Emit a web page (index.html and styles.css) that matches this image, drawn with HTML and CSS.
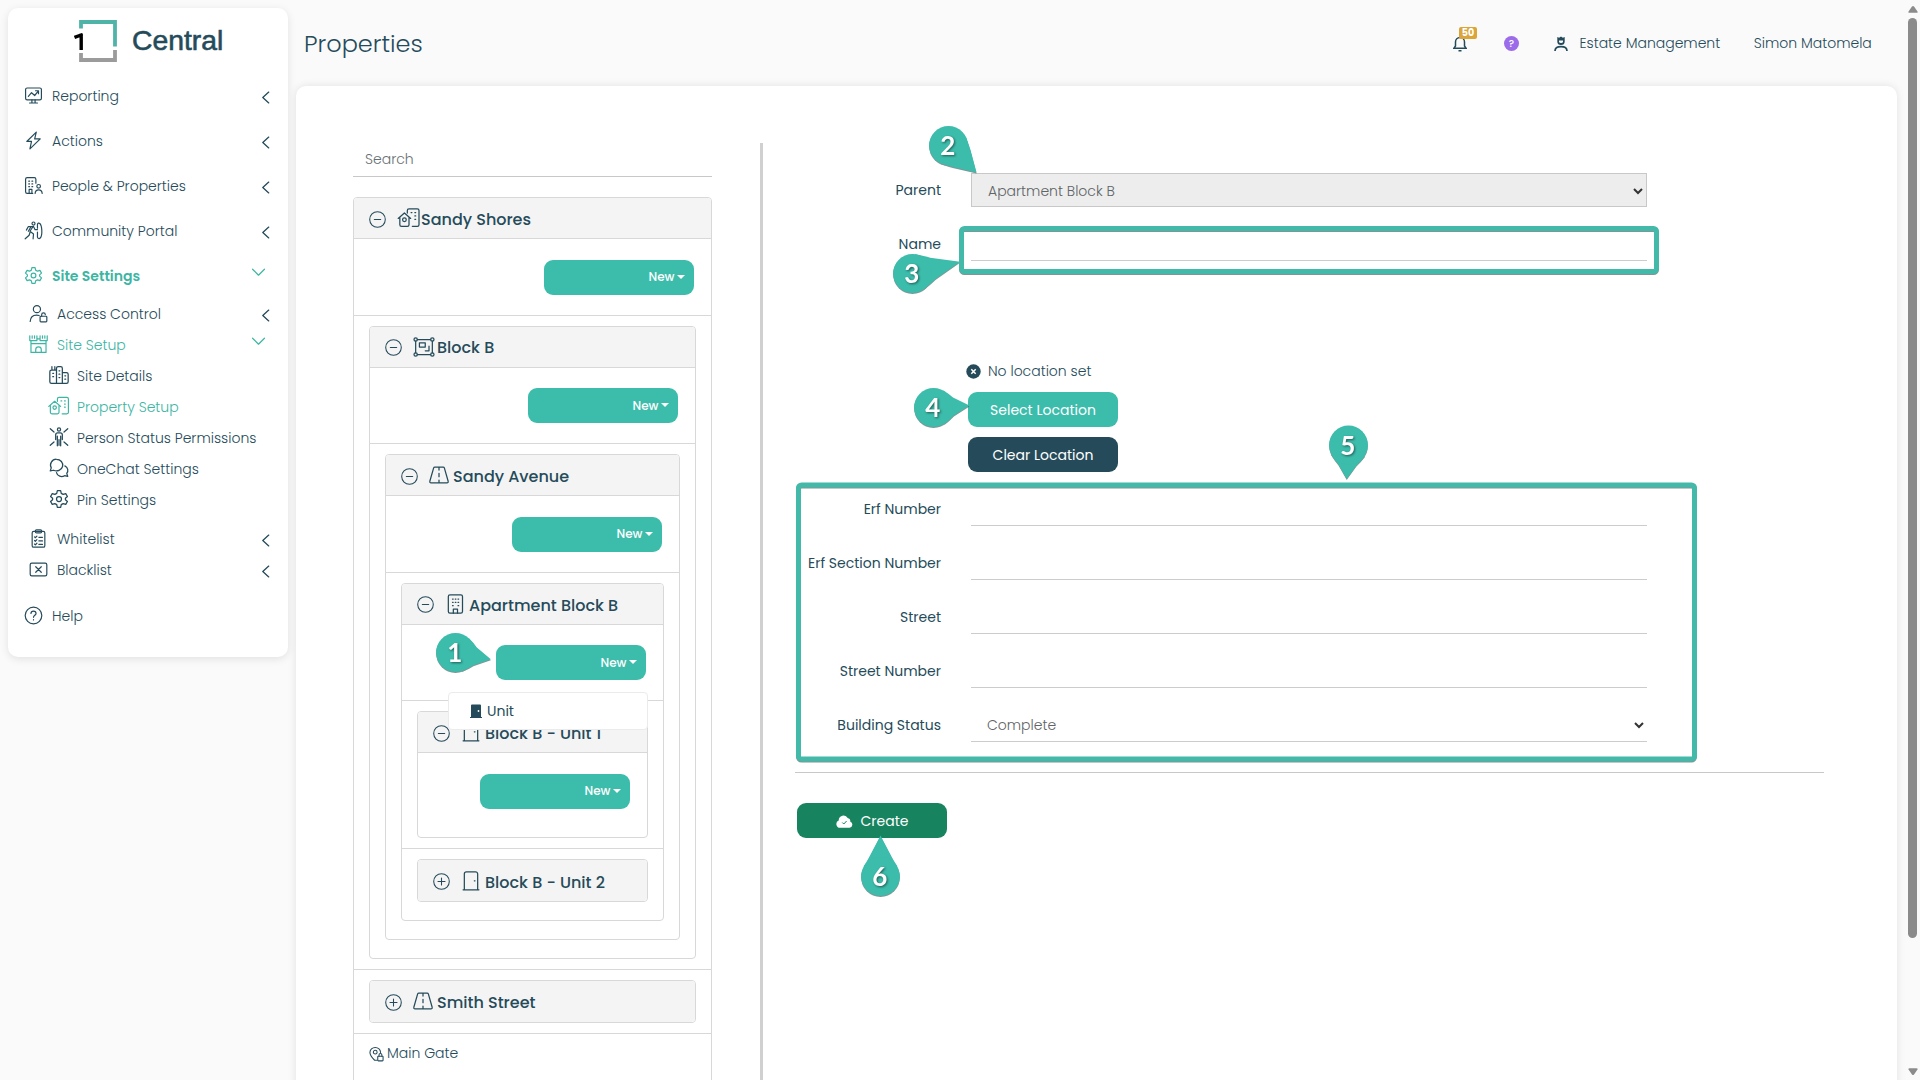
FILE: index.html
```html
<!DOCTYPE html>
<html lang="en">
<head>
    <meta charset="UTF-8">
    <meta name="viewport" content="width=device-width, initial-scale=1.0">
    <title>Properties</title>
    <link rel="stylesheet" href="styles.css">
</head>
<body>
    <!-- icon set -->
    <svg class="sprite">
        <symbol id="i-report" viewBox="0 0 24 24"><rect x="2" y="2.5" width="20" height="15" rx="2"/><path d="M10 17.5v4M14 17.5v4M7 21.5h10M5.5 13l4-4.5 4 3.5 4.5-5.5M14.5 6h3.8v3.8"/></symbol>
        <symbol id="i-bolt" viewBox="0 0 24 24"><path d="M15.5 1.5 3.5 13.2h6L7.5 22.5 20.5 10h-7z"/></symbol>
        <symbol id="i-people" viewBox="0 0 24 24"><path d="M11 22H4a2 2 0 0 1-2-2V4a2 2 0 0 1 2-2h9a2 2 0 0 1 2 2v5M6.5 22v-5H10v5M14 22c.3-3 2-4.5 4.5-4.5S22.7 19 23 22"/><circle cx="18.5" cy="13" r="2.3"/><path d="M6 6.5h1M10 6.5h1M6 10h1M10 10h1M6 13.5h1M10 13.5h1"/></symbol>
        <symbol id="i-portal" viewBox="0 0 24 24"><circle cx="12" cy="3.2" r="1.9"/><path d="M3 11.5 5.5 7h6l-4 6 4.5 3.5-.5 6M7.5 14.5 6.5 18 1.5 22.5M12 7l2 4h3M9 7l-3.5 6"/><path d="M17 4c1-2.5 5-2.5 5.5 8S18.5 24 17 20.5M17 4v5M17 14v6.5"/></symbol>
        <symbol id="i-gear" viewBox="0 0 24 24"><circle cx="12" cy="12" r="3"/><path d="M10 2h4l.7 3.2 2.3 1.3 3.1-1 2 3.5-2.4 2.2v1.600l2.400 2.200-2 3.500-3.100-1-2.300 1.300L14 22h-4l-.7-3.200L7 17.500l-3.100 1-2-3.500 2.400-2.200v-1.600L1.900 9l2-3.500 3.100 1 2.300-1.300z"/></symbol>
        <symbol id="i-access" viewBox="0 0 24 24"><circle cx="10" cy="6.5" r="4.5"/><path d="M1.5 22c.3-5 3.5-8 8-8 1.2 0 2.3.2 3.3.6M16 15.5v-2a2.3 2.3 0 0 1 4.6 0"/><rect x="14" y="15.5" width="8.5" height="7" rx="1"/></symbol>
        <symbol id="i-castle" viewBox="0 0 24 24"><path d="M1 1v6h9V1M4 1v3M7 1v3M14 1v6h9V1M17 1v3M20 1v3M10 5h4M2.5 7v15h19V7M2.5 11h19M8.5 22v-3.5a3.5 3.5 0 0 1 7 0V22"/></symbol>
        <symbol id="i-city" viewBox="0 0 24 24"><path d="M9 22H3a2 2 0 0 1-2-2V8a2 2 0 0 1 2-2h6M3.5 6V2M7 6V2M9 22V4a2 2 0 0 1 2-2h3a2 2 0 0 1 2 2v18zM16 9h5a2 2 0 0 1 2 2v9a2 2 0 0 1-2 2h-5"/><path d="M4.5 10h1M4.5 14h1M12 7h1M12 11h1M12 15h1M19 13h1M19 17h1"/></symbol>
        <symbol id="i-property" viewBox="0 0 28 24"><path d="M1 12.5 8.5 6l7.5 6.5M3 11v9a2 2 0 0 0 2 2h7a2 2 0 0 0 2-2v-9M12 6V3a2 2 0 0 1 2-2h10a2 2 0 0 1 2 2v17a2 2 0 0 1-2 2h-6"/><circle cx="8.5" cy="14" r="2.2"/><path d="M16.5 5.5h1M21 5.5h1M21 9.5h1M21 13.5h1"/></symbol>
        <symbol id="i-person" viewBox="0 0 24 24"><circle cx="12" cy="3" r="1.9"/><path d="M8 9.5A2.5 2.5 0 0 1 10.5 7h3A2.5 2.5 0 0 1 16 9.5V15M8 9.5V15M10 11v11.5M14 11v11.5M12 15v7M1.5 2 6 6M22.5 2 18 6M1.5 22 6 18M22.5 22 18 18"/></symbol>
        <symbol id="i-chat" viewBox="0 0 24 24"><path d="M9 1.5a7.5 7 0 1 1-3.5 13.2L1.5 15.5l1.2-3.6A7 7 0 0 1 9 1.5zM19 9.5c4 2 4.5 6 2.3 9l1.2 3.5-3.8-.8c-3.7 2.3-8.7.6-9.7-3.7"/></symbol>
        <symbol id="i-list" viewBox="0 0 24 24"><rect x="4" y="3" width="16" height="20" rx="2"/><rect x="8" y="1" width="8" height="4" rx="1.5"/><path d="m7 10 1 1 2-2M7 14.5l1 1 2-2M7 19l1 1 2-2M12.5 10.5H17M12.5 15H17M12.5 19.5H17"/></symbol>
        <symbol id="i-block" viewBox="0 0 24 24"><rect x="1.5" y="4" width="21" height="16" rx="2"/><path d="m8.5 8.5 7 7M15.5 8.5l-7 7"/></symbol>
        <symbol id="i-help" viewBox="0 0 24 24"><circle cx="12" cy="12" r="10.5"/><path d="M8.8 9.5c0-4 6.4-4 6.4 0 0 2.2-3.2 2.3-3.2 4.8M12 17.3v.4"/></symbol>
        <symbol id="i-left" viewBox="0 0 24 24"><path d="M18 2 7 12l11 10"/></symbol>
        <symbol id="i-down" viewBox="0 0 24 24"><path d="m1 6 11 11L23 6"/></symbol>
        <symbol id="i-minus" viewBox="0 0 24 24"><circle cx="12" cy="12" r="11"/><path d="M7.5 12h9"/></symbol>
        <symbol id="i-plus" viewBox="0 0 24 24"><circle cx="12" cy="12" r="11"/><path d="M7 12h10M12 7v10"/></symbol>
        <symbol id="i-group" viewBox="0 0 26 24"><circle cx="3" cy="3" r="2"/><circle cx="23" cy="3" r="2"/><circle cx="3" cy="21" r="2"/><circle cx="23" cy="21" r="2"/><path d="M5 3h16M5 21h16M3 5v14M23 5v14M7.5 7h7v5h-7zM14.5 16.5H19V11"/></symbol>
        <symbol id="i-road" viewBox="0 0 24 24"><path d="M7 2.5h10a1.5 1.5 0 0 1 1.4 1L23 19.5a1.5 1.5 0 0 1-1.4 2H2.4A1.5 1.5 0 0 1 1 19.5L5.6 3.5A1.5 1.5 0 0 1 7 2.5zM12 3v3M12 10v4M12 18v3.5"/></symbol>
        <symbol id="i-building" viewBox="0 0 24 24"><rect x="4" y="1" width="17" height="22" rx="2"/><path d="M10 23v-5h5v5M9 6h.8M12.3 6h.8M15.6 6h.8M9 10h.8M12.3 10h.8M15.6 10h.8M9 14h.8M15.6 14h.8"/></symbol>
        <symbol id="i-door" viewBox="0 0 24 24"><path d="M2.5 22.500h19M4 22.500V3.500A2.500 2.500 0 0 1 6.500 1h11A2.500 2.500 0 0 1 20 3.500v19M16 11.800h.8"/></symbol>
        <symbol id="i-gate" viewBox="0 0 24 24"><path d="M9 22C3 16 1.5 13 1.5 9.5a8.5 8 0 0 1 17 0M13 22H9"/><circle cx="10" cy="9" r="3"/><rect x="14" y="15.5" width="8.5" height="7.5" rx="1"/><path d="M16 15.5v-2a2.3 2.3 0 0 1 4.6 0v2"/></symbol>
    </svg>

    <div class="app">
        <aside class="sidebar">
            <div class="logo">
                <svg width="44" height="44" viewBox="0 0 44 44">
                    <path d="M7 9.5V3h34v24.5" stroke="#4fb3a7" stroke-width="3.8"/>
                    <path d="M7 34v7h34V31" stroke="#9b9b9b" stroke-width="3.8"/>
                    <path d="M7.2 31V14.5M8.5 15.5.5 18.500" stroke="#000" stroke-width="3.4"/>
                </svg>
                <span>Central</span>
            </div>
            <nav class="menu">
                <a class="item"><svg><use href="#i-report"/></svg><span>Reporting</span><svg class="chev"><use href="#i-left"/></svg></a>
                <a class="item"><svg><use href="#i-bolt"/></svg><span>Actions</span><svg class="chev"><use href="#i-left"/></svg></a>
                <a class="item"><svg><use href="#i-people"/></svg><span>People &amp; Properties</span><svg class="chev"><use href="#i-left"/></svg></a>
                <a class="item"><svg><use href="#i-portal"/></svg><span>Community Portal</span><svg class="chev"><use href="#i-left"/></svg></a>
                <a class="item active bold"><svg><use href="#i-gear"/></svg><span>Site Settings</span><svg class="chev down"><use href="#i-down"/></svg></a>
                <div class="submenu">
                    <a class="item"><svg><use href="#i-access"/></svg><span>Access Control</span><svg class="chev"><use href="#i-left"/></svg></a>
                    <a class="item active"><svg><use href="#i-castle"/></svg><span>Site Setup</span><svg class="chev down"><use href="#i-down"/></svg></a>
                    <div class="leaf">
                        <a class="item"><svg><use href="#i-city"/></svg><span>Site Details</span></a>
                        <a class="item active"><svg><use href="#i-property"/></svg><span>Property Setup</span></a>
                        <a class="item"><svg><use href="#i-person"/></svg><span>Person Status Permissions</span></a>
                        <a class="item"><svg><use href="#i-chat"/></svg><span>OneChat Settings</span></a>
                        <a class="item"><svg><use href="#i-gear"/></svg><span>Pin Settings</span></a>
                    </div>
                    <a class="item"><svg><use href="#i-list"/></svg><span>Whitelist</span><svg class="chev"><use href="#i-left"/></svg></a>
                    <a class="item"><svg><use href="#i-block"/></svg><span>Blacklist</span><svg class="chev"><use href="#i-left"/></svg></a>
                </div>
                <a class="item"><svg><use href="#i-help"/></svg><span>Help</span></a>
            </nav>
        </aside>

        <div class="main">
            <header class="topbar">
                <h1>Properties</h1>
                <div class="bell">
                    <svg width="14" height="16" viewBox="0 0 14 16" fill="none" stroke="#254b5a" stroke-width="1.5"><path d="M1 12.2h12L11.5 10V6a4.5 4.5 0 0 0-9 0v4zM5.5 14.8h3"/></svg>
                    <span class="badge">50</span>
                </div>
                <span class="info">?</span>
                <svg class="role" width="14" height="15" viewBox="0 0 14 15"><path d="M3.3 1l1.8.7L7 .5l1.9 1.2 1.8-.7v4.5a3.7 3.5 0 0 1-7.4 0z" fill="#254b5a"/><path d="M5 4.5h4v1a2 1.6 0 0 1-4 0z" fill="#fafafa"/><path d="M1 15c0-3 2.3-4.3 6-4.3s6 1.3 6 4.3" fill="none" stroke="#254b5a" stroke-width="1.7"/></svg>
                <span class="org">Estate Management</span>
                <span class="user">Simon Matomela</span>
            </header>

            <section class="panel">
                <div class="tree">
                    <input class="search" type="text" placeholder="Search">
                    <div class="node root">
                        <div class="node-head"><svg class="tog"><use href="#i-minus"/></svg><svg class="kind site"><use href="#i-property"/></svg><span>Sandy Shores</span></div>
                        <div class="node-actions"><button class="btn-new">New</button></div>
                        <div class="node-child">
                            <div class="node">
                                <div class="node-head"><svg class="tog"><use href="#i-minus"/></svg><svg class="kind group"><use href="#i-group"/></svg><span>Block B</span></div>
                                <div class="node-actions"><button class="btn-new">New</button></div>
                                <div class="node-child last">
                                    <div class="node">
                                        <div class="node-head"><svg class="tog"><use href="#i-minus"/></svg><svg class="kind"><use href="#i-road"/></svg><span>Sandy Avenue</span></div>
                                        <div class="node-actions"><button class="btn-new">New</button></div>
                                        <div class="node-child last">
                                            <div class="node">
                                                <div class="node-head"><svg class="tog"><use href="#i-minus"/></svg><svg class="kind"><use href="#i-building"/></svg><span>Apartment Block B</span></div>
                                                <div class="node-actions">
                                                    <button class="btn-new">New</button>
                                                    <div class="dropdown">
                                                        <svg width="12" height="14" viewBox="0 0 12 14"><path d="M1 13V1.500A1 1 0 0 1 2 .5h8a1 1 0 0 1 1 1V13h1v1H0v-1z" fill="#254b5a"/><circle cx="8.5" cy="7" r=".9" fill="#fff"/></svg>
                                                        <span>Unit</span>
                                                    </div>
                                                </div>
                                                <div class="node-child">
                                                    <div class="node">
                                                        <div class="node-head"><svg class="tog"><use href="#i-minus"/></svg><svg class="kind"><use href="#i-door"/></svg><span>Block B - Unit 1</span></div>
                                                        <div class="node-actions last"><button class="btn-new">New</button></div>
                                                    </div>
                                                </div>
                                                <div class="node-child last">
                                                    <div class="node closed">
                                                        <div class="node-head"><svg class="tog"><use href="#i-plus"/></svg><svg class="kind"><use href="#i-door"/></svg><span>Block B - Unit 2</span></div>
                                                    </div>
                                                </div>
                                            </div>
                                        </div>
                                    </div>
                                </div>
                            </div>
                        </div>
                        <div class="node-child">
                            <div class="node closed">
                                <div class="node-head"><svg class="tog"><use href="#i-plus"/></svg><svg class="kind"><use href="#i-road"/></svg><span>Smith Street</span></div>
                            </div>
                        </div>
                        <div class="node-leaf"><svg><use href="#i-gate"/></svg><span>Main Gate</span></div>
                    </div>
                </div>

                <form class="form">
                    <div class="row">
                        <label>Parent</label>
                        <div class="field select disabled"><span>Apartment Block B</span><svg viewBox="0 0 10 7"><path d="m1 1 4 4 4-4"/></svg></div>
                    </div>
                    <div class="row"><label>Name</label><input class="field" type="text"></div>
                    <div class="location">
                        <div class="loc-status">
                            <svg width="15" height="15" viewBox="0 0 15 15"><circle cx="7.5" cy="7.5" r="7.2" fill="#254b5a"/><path d="m5.3 5.3 4.4 4.4M9.7 5.3 5.3 9.7" stroke="#fff" stroke-width="1.5"/></svg>
                            <span>No location set</span>
                        </div>
                        <button type="button" class="btn teal">Select Location</button>
                        <button type="button" class="btn dark">Clear Location</button>
                    </div>
                    <div class="row"><label>Erf Number</label><input class="field" type="text"></div>
                    <div class="row"><label>Erf Section Number</label><input class="field" type="text"></div>
                    <div class="row"><label>Street</label><input class="field" type="text"></div>
                    <div class="row"><label>Street Number</label><input class="field" type="text"></div>
                    <div class="row">
                        <label>Building Status</label>
                        <div class="field select"><span>Complete</span><svg viewBox="0 0 10 7"><path d="m1 1 4 4 4-4"/></svg></div>
                    </div>
                    <hr>
                    <button type="button" class="btn green">
                        <svg width="17" height="13" viewBox="0 0 17 13"><path d="M4 12.800A3.800 3.800 0 0 1 2.700 5.500a4.800 4.800 0 0 1 9-2.400 3.200 3.200 0 0 1 2.600 3.700 3.100 3.100 0 0 1-.8 6z" fill="#fff"/><path d="m6.3 7.5 1.5 1.5 2.8-3" fill="none" stroke="#17845f" stroke-width="1"/></svg>
                        <span>Create</span>
                    </button>
                </form>
            </section>
        </div>

        <div class="scrollbar">
            <svg width="10" height="7" viewBox="0 0 10 7"><path d="M4 .6q1-1 2 0l3.500 5q.5 1.200-1 1.200h-7q-1.500 0-1-1.200z"/></svg>
            <div class="thumb"></div>
            <svg class="end" width="10" height="7" viewBox="0 0 10 7"><path d="M4 6.400q1 1 2 0l3.500-5Q10 .2 8.500.2h-7Q0 .2.500 1.400z"/></svg>
        </div>
    </div>

    <!-- numbered guide markers -->
    <svg class="guide" width="1920" height="1080">
        <rect x="961.5" y="228.5" width="695" height="43" rx="3"/>
        <rect x="798.5" y="485" width="896" height="274" rx="3"/>
        <g transform="translate(455.5 652.5)"><path transform="rotate(101)" d="M-17 -10Q-13 -16 -9 -20L0 -36 9 -20Q13 -16 17 -10z"/><circle r="19.4"/><text x="-.7" y="9.5">1</text></g>
        <g transform="translate(948.5 145.5)"><path transform="rotate(134)" d="M-18 -7Q-15 -14 -12 -19L0 -39 12 -19Q15 -14 18 -7z"/><circle r="19.4"/><text x="-.7" y="9.5">2</text></g>
        <g transform="translate(912.5 273.5)"><path transform="rotate(76)" d="M-18 -7Q-14 -16 -11 -21L0 -49 11 -21Q14 -16 18 -7z"/><circle r="19.4"/><text x="-.7" y="9.5">3</text></g>
        <g transform="translate(933.5 407.5)"><path transform="rotate(87)" d="M-17 -10Q-13 -16 -9 -20L0 -36 9 -20Q13 -16 17 -10z"/><circle r="19.4"/><text x="-.7" y="9.5">4</text></g>
        <g transform="translate(1348.5 445)"><path transform="rotate(183)" d="M-17 -10Q-13 -16 -9 -20L0 -34 9 -20Q13 -16 17 -10z"/><circle r="19.4"/><text x="-.7" y="9.5">5</text></g>
        <g transform="translate(880.5 876.5)"><path d="M-17 -10Q-13 -16 -11 -20L0 -41 11 -20Q13 -16 17 -10z"/><circle r="19.4"/><text x="-.7" y="9.5">6</text></g>
    </svg>
</body>
</html>
```
FILE: styles.css
```css
* {
    box-sizing: border-box;
}

body {
    margin: 0;
    width: 1920px;
    height: 1080px;
    overflow: hidden;
    position: relative;
    background: #fafafa;
    color: #254b5a;
    font-family: Poppins, Inter, sans-serif;
    font-size: 14px;
    font-weight: 300;
}

svg {
    display: block;
    flex: none;
    fill: none;
}

symbol {
    stroke-linecap: round;
    stroke-linejoin: round;
}

.sprite {
    display: none;
}

.app {
    display: flex;
    height: 1080px;
}

/* sidebar */
.sidebar {
    width: 280px;
    height: 649px;
    margin: 8px 8px 0 8px;
    background: #fff;
    border-radius: 10px;
    box-shadow: 0 2px 8px rgba(0, 0, 0, 0.1);
}

.logo {
    display: flex;
    height: 65.5px;
    padding: 11px 0 0 66px;
}

.logo span {
    margin-left: 14px;
    padding-top: 5px;
    font: 28.3px/32px "Liberation Sans", Arial, sans-serif;
    -webkit-text-stroke: 0.6px #254b5a;
}

.item {
    display: flex;
    align-items: center;
    height: 45px;
    padding: 0 19px 0 16px;
    stroke: #254b5a;
}

.item svg {
    width: 19px;
    height: 19px;
    margin: -2px 9px 0 0;
    stroke-width: 1.5;
}

.item span {
    stroke: none;
}

.item .chev {
    width: 13px;
    height: 13px;
    margin: 3px -3px 0 auto;
    stroke-width: 2.4;
}

.item .chev.down {
    margin: -8px 4px 0 auto;
    stroke-width: 2.2;
}

.active {
    color: #3cb5a3;
    stroke: #3cb5a3;
}

.bold {
    font-weight: 600;
}

.submenu .item {
    height: 31px;
    padding-left: 21px;
}

.submenu {
    padding-bottom: 8px;
}

.leaf {
    padding-bottom: 8px;
}

.leaf .item {
    padding-left: 40px;
}

.leaf .item svg {
    width: 22px;
    height: 20px;
    margin-right: 7px;
}

/* header */
.main {
    width: 1601px;
}

.topbar {
    display: flex;
    align-items: center;
    height: 86px;
    padding-left: 8px;
}

.topbar h1 {
    width: 1149px;
    margin: 0;
    font-size: 24px;
    font-weight: 300;
}

.bell {
    position: relative;
    padding-top: 1px;
}

.badge {
    position: absolute;
    left: 6px;
    top: -8px;
    width: 18px;
    height: 12px;
    border-radius: 2px;
    background: #dba53a;
    color: #fff;
    font-size: 9.5px;
    line-height: 12px;
    font-weight: 700;
    text-align: center;
}

.info {
    width: 15px;
    height: 15px;
    margin-left: 37px;
    border-radius: 50%;
    background: #9b6bea;
    color: #fff;
    font-size: 10px;
    font-weight: 500;
    line-height: 15px;
    text-align: center;
}

.role {
    margin-left: 35px;
}

.org {
    margin-left: 11.5px;
}

.user {
    margin-left: 33.5px;
}

.panel {
    display: flex;
    height: 1010px;
    padding: 57px 0 0 57px;
    background: #fff;
    border-radius: 10px;
    box-shadow: 0 0 8px rgba(0, 0, 0, 0.1);
}

/* property tree */
.tree {
    width: 410px;
    padding-right: 48px;
    border-right: 3px solid #d0d0d0;
}

.search {
    display: block;
    width: 359px;
    height: 34px;
    margin-bottom: 20px;
    padding: 0 12px;
    border: 0;
    border-bottom: 1px solid #c8c8c8;
    font: inherit;
}

.search::placeholder {
    color: #666f73;
}

.node {
    padding-bottom: 8px;
    border: 1px solid #d8d8d8;
    border-radius: 4px;
    background: #fff;
}

.node.root {
    width: 359px;
    height: 920px;
}

.node.closed {
    padding: 0;
}

.node-head {
    display: flex;
    align-items: center;
    height: 41.33px;
    padding-left: 15px;
    border-bottom: 1px solid #d8d8d8;
    border-radius: 3px 3px 0 0;
    background: #f4f4f4;
    font-size: 16px;
    font-weight: 500;
    white-space: nowrap;
    stroke: #254b5a;
    stroke-width: 1.5;
}

.node-head span {
    padding-top: 2.6px;
}

.closed .node-head {
    height: 40.66px;
    border: 0;
    border-radius: 3px;
}

.tog {
    width: 17px;
    height: 17px;
    margin: 2px 11px 0 0;
}

.kind {
    width: 20px;
    height: 20px;
    margin-right: 4px;
}

.kind.site {
    width: 24px;
    margin-right: 0;
}

.kind.group {
    width: 22px;
    margin-right: 2px;
}

.node-actions {
    position: relative;
    display: flex;
    justify-content: flex-end;
    height: 76.2px;
    padding: 20.4px 17px 0 0;
    border-bottom: 1px solid #d8d8d8;
}

.node-actions.last {
    height: 76px;
    border: 0;
}

.node-child {
    padding: 10px 15px;
    border-bottom: 1px solid #d8d8d8;
}

.node-child.last {
    border: 0;
}

.btn-new {
    display: flex;
    align-items: center;
    justify-content: flex-end;
    gap: 2.5px;
    width: 150px;
    height: 35px;
    padding: 0 9px 0 0;
    border: 0;
    border-radius: 9px;
    background: #3cbcab;
    color: #fff;
    font: 500 12px Poppins, Inter, sans-serif;
}

.btn-new::after {
    content: "";
    margin-top: -1px;
    border: 4px solid transparent;
    border-top: 4px solid #fff;
    border-bottom: 0;
}

.dropdown {
    position: absolute;
    z-index: 2;
    right: 15px;
    top: 67px;
    display: flex;
    align-items: center;
    gap: 5px;
    width: 200px;
    height: 38px;
    padding: 1px 0 0 21px;
    border: 1px solid #ebebeb;
    border-radius: 4px;
    background: #fff;
    font-weight: 400;
}

.node-leaf {
    display: flex;
    align-items: center;
    gap: 3px;
    height: 40px;
    padding-left: 15px;
    stroke: #254b5a;
    stroke-width: 1.7;
}

.node-leaf svg {
    width: 15px;
    height: 16px;
}

.node-leaf span,
.node-head span {
    stroke: none;
}

/* form */
.form {
    width: 1029px;
    margin-left: 32px;
    padding-top: 30px;
}

.row {
    display: flex;
    align-items: center;
    height: 34px;
    margin-bottom: 20px;
}

.row label {
    width: 146px;
    margin-right: 30px;
    padding-top: 1px;
    text-align: right;
    white-space: nowrap;
    font-weight: 400;
}

.field {
    width: 676px;
    height: 34px;
    border: 0;
    border-bottom: 1px solid #ccc;
    background: #fff;
}

.select {
    display: flex;
    align-items: center;
    justify-content: space-between;
    padding: 2px 3px 0 16px;
    color: #5f6466;
}

.select svg {
    width: 10px;
    height: 7px;
    stroke: #333;
    stroke-width: 2;
}

.select.disabled {
    border: 1px solid #c8c8c8;
    background: #ededed;
}

.location {
    height: 211px;
    padding: 80px 0 0 173px;
}

.loc-status {
    display: flex;
    align-items: center;
    gap: 7px;
    height: 20px;
    margin: 0 0 11px -2px;
}

.btn {
    display: flex;
    align-items: center;
    justify-content: center;
    gap: 8px;
    width: 150px;
    height: 35px;
    margin-bottom: 10px;
    padding: 1px 0 0;
    border: 0;
    border-radius: 9px;
    color: #fff;
    font: 400 14px Poppins, Inter, sans-serif;
}

.teal {
    background: #3cbcab;
}

.dark {
    background: #254b5a;
}

.green {
    margin-left: 2px;
    background: #17845f;
}

hr {
    margin: 30px 0;
    border: 0;
    border-top: 1px solid #c8c8c8;
}

/* scrollbar */
.scrollbar {
    display: flex;
    flex-direction: column;
    align-items: center;
    width: 23px;
    padding: 6px 0 5px 8px;
}

.scrollbar svg {
    fill: #8b8b8b;
}

.thumb {
    width: 9px;
    height: 920px;
    margin-top: 5px;
    border-radius: 5px;
    background: #8b8b8b;
}

.scrollbar .end {
    margin-top: auto;
}

/* guide markers */
.guide {
    position: absolute;
    z-index: 5;
    left: 0;
    top: 0;
    fill: #3cbcab;
    filter: drop-shadow(0 1px 0.5px rgba(40, 80, 80, 0.6));
}

.guide rect {
    fill: none;
    stroke: #43b9a9;
    stroke-width: 5;
}

.guide text {
    fill: #fff;
    font: 700 26px Lato, sans-serif;
    text-anchor: middle;
    filter: drop-shadow(1px 1px 1px rgba(0, 0, 0, 0.5));
}
```
